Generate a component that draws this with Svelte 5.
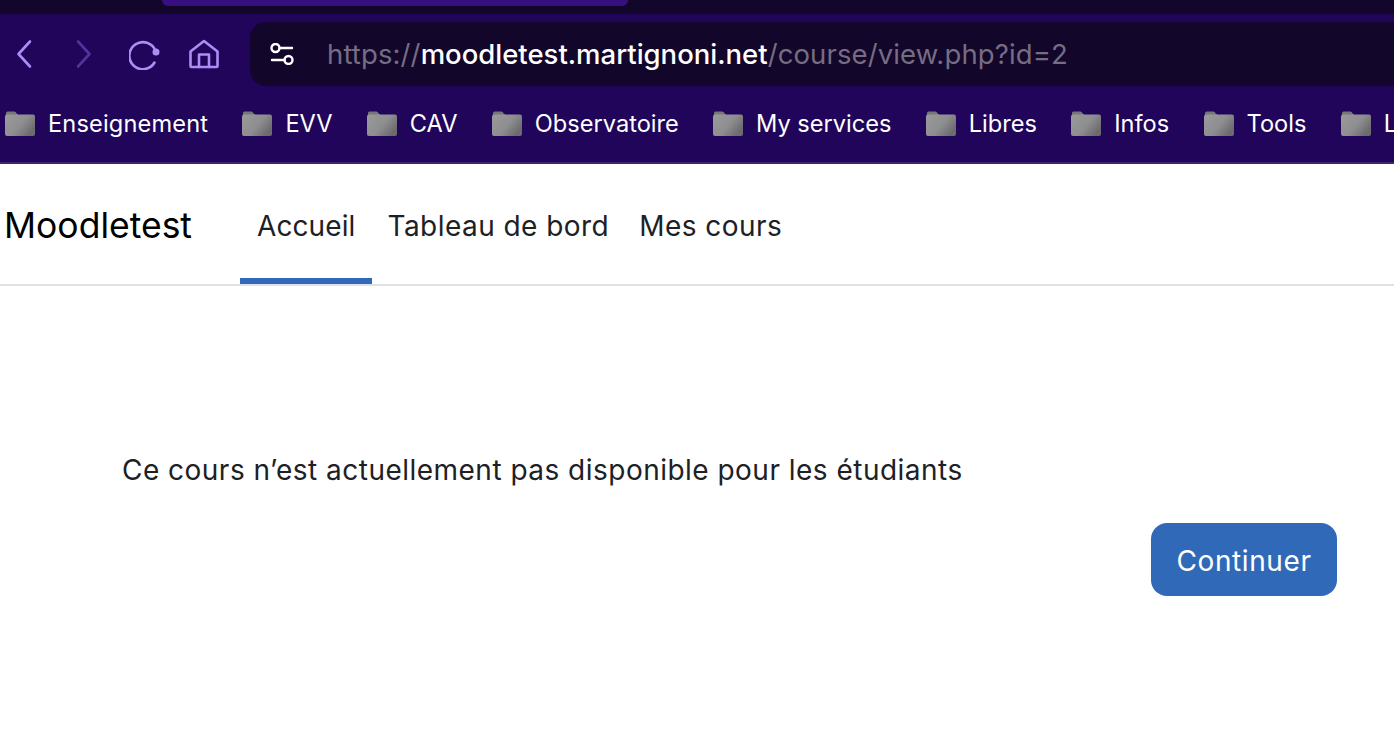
<script>
  const bookmarks = ['Enseignement','EVV','CAV','Observatoire','My services','Libres','Infos','Tools','L'];
  const tabs = ['Accueil','Tableau de bord','Mes cours'];
</script>

<div class="page">
  <header class="chrome">
    <div class="tabstrip"><div class="activetab"></div></div>
    <div class="toolbar">
      <div class="navicons">
        <svg class="ic back" viewBox="0 0 18 30" width="18" height="30"><path d="M14 2.500 2.500 15 14 27.500" /></svg>
        <svg class="ic fwd" viewBox="0 0 18 30" width="18" height="30"><path d="M3 2.500 14.500 15 3 27.500" /></svg>
        <svg class="ic reload" viewBox="0 0 32 32" width="32" height="32"><path d="M25.500 24.500A13.500 13.500 0 1 1 26.500 13" /><circle class="dot" cx="27" cy="14" r="3.500" /></svg>
        <svg class="ic home" viewBox="0 0 30 30" width="30" height="30"><path d="M1.500 12.500 15 2l13.500 10.500V27a1 1 0 0 1-1 1H2.500a1 1 0 0 1-1-1z" /><path d="M10 28V15.500h10V28" /></svg>
      </div>
      <div class="urlbar">
        <svg class="tune" viewBox="0 0 24 22" width="24" height="22"><circle cx="5.500" cy="5" r="4" /><path d="M9.500 5H22M2 17h12.500" /><circle cx="18.500" cy="17" r="4" /></svg>
        <div class="url"><span class="dim">https://</span><span class="host">moodletest.martignoni.net</span><span class="dim">/course/view.php?id=2</span></div>
      </div>
    </div>
    <div class="bookmarks">
      {#each bookmarks as b}
        <div class="bm">
          <svg class="folder" viewBox="0 0 30 25" width="30" height="25">
            <defs><linearGradient id="fg" x1="0" y1="0" x2="1" y2="0.6"><stop offset="0" stop-color="#9a9a9d"/><stop offset="0.6" stop-color="#8e8e90"/><stop offset="1" stop-color="#6c6c6e"/></linearGradient></defs>
            <path d="M1 5V2Q1 .500 2.500 .500H9.500Q11 .500 12 3H13V6H1z" fill="#77777a" />
            <rect x="0" y="3.500" width="30" height="21.500" rx="2" fill="url(#fg)" />
          </svg>
          <span>{b}</span>
        </div>
      {/each}
    </div>
  </header>

  <nav class="nav">
    <div class="brand">Moodletest</div>
    <div class="tabs">
      {#each tabs as t, i}
        <div class="tab" class:active={i === 0}>{t}</div>
      {/each}
    </div>
  </nav>

  <main class="main">
    <p class="msg">Ce cours n’est actuellement pas disponible pour les étudiants</p>
    <div class="actions"><button class="btn">Continuer</button></div>
  </main>
</div>

<style>
  :global(body) { margin: 0; background: #fff; overflow: hidden; }
  .page { width: 1394px; height: 730px; overflow: hidden; font-family: Inter, "Liberation Sans", sans-serif; }
  .chrome { background: #20055a; height: 162px; border-bottom: 2px solid #3f2470; overflow: hidden; }
  .tabstrip { height: 14px; background: #12062a; padding-left: 162px; }
  .activetab { width: 466px; height: 6px; background: #36107f; border-radius: 0 0 12px 12px; }
  .toolbar { display: flex; align-items: center; height: 64px; margin-top: 8px; }
  .navicons { display: flex; align-items: center; width: 250px; flex: none; padding-left: 16px; box-sizing: border-box; }
  .ic { fill: none; stroke: #ab8df5; stroke-width: 2.600; stroke-linecap: round; stroke-linejoin: round; flex: none; }
  .fwd { stroke: #53349a; margin-left: 41px; }
  .reload { margin-left: 36px; }
  .home { margin-left: 28px; }
  .dot { fill: #ab8df5; stroke: none; }
  .urlbar { flex: 1; height: 64px; background: #12062a; border-radius: 16px 0 0 16px; display: flex; align-items: center; padding-left: 20px; }
  .tune { fill: none; stroke: #fff; stroke-width: 2.400; stroke-linecap: round; flex: none; }
  .url { margin-left: 33px; font-size: 27.500px; white-space: nowrap; }
  .dim { color: #766d83; letter-spacing: 0.120px; }
  .host { color: #fff; font-weight: 500; }
  .bookmarks { display: flex; align-items: center; gap: 34.300px; padding: 0 0 2px 5px; height: 76px; box-sizing: border-box; white-space: nowrap; }
  .bm { display: flex; align-items: center; gap: 13px; color: #fff; font-size: 23.600px; }
  .bm:first-child span { letter-spacing: 0.150px; }
  .folder { flex: none; }
  .nav { display: flex; height: 120px; border-bottom: 2px solid #dee2e6; align-items: stretch; padding-left: 4px; }
  .brand { font-size: 35.500px; color: #000; width: 236px; display: flex; align-items: center; padding-top: 2px; box-sizing: border-box; }
  .tabs { display: flex; }
  .tab { padding: 10px 15px 0; color: #1d2125; font-size: 28px; letter-spacing: 0.450px; display: flex; align-items: center; border-bottom: 6px solid transparent; box-sizing: border-box; }
  .tab.active { border-bottom-color: #3069b8; padding: 10px 17px 0; letter-spacing: 0.100px; }
  .main { padding: 0 57px 0 122px; }
  .msg { margin: 166px 0 0; font-size: 28px; letter-spacing: 0.480px; line-height: 36px; color: #1d2125; }
  .actions { display: flex; justify-content: flex-end; margin-top: 35px; }
  .btn { width: 186px; height: 73px; background: #3069b8; color: #fff; border: 0; border-radius: 16px; font: inherit; font-size: 28px; letter-spacing: 0.600px; padding: 2px 0 0; }
</style>
